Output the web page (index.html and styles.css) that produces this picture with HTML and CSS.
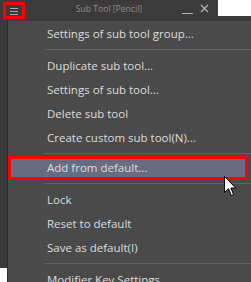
FILE: index.html
```html
<!DOCTYPE html>
<html lang="en">
    <head>
        <meta charset="UTF-8" />
        <meta name="viewport" content="width=device-width, initial-scale=1.0" />
        <title>Sub Tool menu</title>
        <link rel="stylesheet" href="styles.css">
    </head>
    <body>
        <div id="top">
            <div id="titlebar">
                <div id="menu-btn">
                    <svg width="10" height="8" viewBox="0 0 10 8">
                        <path d="M1 1.5H9M1 4.5H9M1 7.5H9" stroke="#a8a8a8" stroke-width="1" />
                    </svg>
                </div>
                <div id="title">Sub Tool [Pencil]</div>
                <div id="win-btns">
                    <svg width="11" height="11" viewBox="0 0 11 11">
                        <path d="M0 9.5H11" stroke="#b4b4b4" stroke-width="1" />
                    </svg>
                    <svg width="9" height="9" viewBox="0 0 9 9">
                        <path d="M1 1L8 8M8 1L1 8" stroke="#b4b4b4" stroke-width="1.2" />
                    </svg>
                </div>
            </div>
            <div id="blank"></div>
        </div>
        <div id="main">
            <div id="side">
                <div id="side-dark"></div>
            </div>
            <div id="menu">
                <div class="item">Settings of sub tool group...</div>
                <div class="sep"></div>
                <div class="item">Duplicate sub tool...</div>
                <div class="item">Settings of sub tool...</div>
                <div class="item">Delete sub tool</div>
                <div class="item">Create custom sub tool(N)...</div>
                <div class="sep"></div>
                <div class="item active">Add from default...</div>
                <div class="sep"></div>
                <div class="item">Lock</div>
                <div class="item">Reset to default</div>
                <div class="item">Save as default(I)</div>
                <div class="sep"></div>
                <div class="item">Modifier Key Settings</div>
            </div>
        </div>
        <svg id="cursor" width="13" height="21" viewBox="0 0 13 21">
            <path d="M0.5 0.5V16.5L4.5 12.8L7.3 19.5L9.6 18.5L6.9 12H11.8Z" fill="#ffffff" stroke="#000000" stroke-width="1" stroke-linejoin="round" />
        </svg>
    </body>
</html>
```

FILE: styles.css
```css
body {
    margin: 0;
    width: 251px;
    height: 282px;
    overflow: hidden;
    background-color: #ffffff;
    font-family: "Open Sans", "Noto Sans", sans-serif;
    position: relative;
}
#top {
    display: flex;
    height: 21px;
    background-color: #3b3b3b;
}
#titlebar {
    width: 218px;
    height: 21px;
    display: grid;
    grid-template-columns: 1fr auto 1fr;
    align-items: start;
}
#menu-btn {
    box-sizing: border-box;
    width: 22px;
    height: 17px;
    margin: 2px 0 0 3px;
    border: 3px solid #ff0000;
    display: flex;
    align-items: center;
    justify-content: center;
}
#title {
    font-size: 8.6px;
    color: #8e8e8e;
    line-height: 19px;
}
#win-btns {
    display: flex;
    justify-content: flex-end;
    gap: 7px;
    padding: 4px 9px 0 0;
}
#blank {
    flex: 1;
    height: 16px;
    background-color: #ffffff;
}
#main {
    display: flex;
    height: 261px;
}
#side {
    width: 7px;
    display: flex;
    flex-direction: column;
}
#side-dark {
    height: 247px;
    background-color: #393939;
}
#menu {
    flex: 1;
    background-color: #4a4a4a;
    border-left: 1px solid #2e2e2e;
    padding-top: 1px;
}
.item {
    height: 24px;
    line-height: 24px;
    padding-left: 39px;
    font-size: 11.5px;
    color: #dedede;
    white-space: nowrap;
}
.item.active {
    box-sizing: border-box;
    margin: -2px 3px 2px 0;
    padding-left: 36px;
    line-height: 18px;
    border: 3px solid #ff0000;
    background-color: #676c82;
}
.sep {
    height: 1px;
    margin: 3px 0 4px 37px;
    background-color: #636363;
}
#cursor {
    position: absolute;
    left: 224px;
    top: 176px;
}
```
